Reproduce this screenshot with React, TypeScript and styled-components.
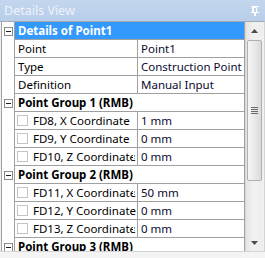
import React from 'react'
import styled, { createGlobalStyle } from 'styled-components'

const GlobalStyle = createGlobalStyle`
  html, body {
    margin: 0;
    padding: 0;
    background: #f2f2f2;
  }
  body {
    width: 265px;
    height: 258px;
    overflow: hidden;
    font-family: "Noto Sans", "DejaVu Sans", sans-serif;
  }
`

const Panel = styled.div`
  width: 265px;
  height: 258px;
  display: flex;
  flex-direction: column;
  background: #f2f2f2;
`
const TitleBar = styled.div`
  height: 21px;
  flex: none;
  display: flex;
  align-items: center;
  justify-content: space-between;
  padding: 0 6px 0 4px;
  background: linear-gradient(#c3d6ee, #b8cee9);
  color: #eef3fa;
  font-size: 12.5px;
`
const Body = styled.div`
  height: 231px;
  flex: none;
  display: flex;
  box-sizing: border-box;
  border-top: 1px solid #a3aab3;
  border-bottom: 1px solid #d4d4d4;
  border-right: 1px solid #d4d4d4;
  padding-left: 1px;
  padding-right: 1px;
`
const Grid = styled.div`
  flex: 1;
  overflow: hidden;
  background: #fff;
  border-left: 1px solid #a0a0a0;
  font-size: 11.5px;
`
const Row = styled.div`
  display: flex;
  height: 18px;
`
const Gutter = styled.div`
  width: 12px;
  flex: none;
  border-right: 1px solid #a0a0a0;
  display: flex;
  justify-content: center;
  padding-top: 5px;
  box-sizing: content-box;
`
const Expander = styled.div`
  width: 7px;
  height: 7px;
  border: 1px solid #8a8a8a;
  background: #fff;
  position: relative;
  margin-left: 1px;
  &::after {
    content: '';
    position: absolute;
    left: 1px;
    top: 3px;
    width: 5px;
    height: 1px;
    background: #202020;
  }
`
const Cell = styled.div<{ $width?: number; $selected?: boolean; $bold?: boolean; $clipped?: boolean }>`
  box-sizing: border-box;
  height: 18px;
  ${({ $width }) => ($width ? `width: ${$width}px; flex: none;` : 'flex: 1;')}
  border-bottom: 1px solid #a0a0a0;
  border-right: 1px solid #a0a0a0;
  display: flex;
  align-items: center;
  padding-left: 3px;
  white-space: nowrap;
  overflow: hidden;
  position: relative;
  background: ${({ $selected }) => ($selected ? '#3399ff' : '#fff')};
  color: ${({ $selected }) => ($selected ? '#fff' : '#000')};
  font-weight: ${({ $bold }) => ($bold ? 700 : 400)};
  ${({ $clipped }) =>
    $clipped &&
    `&::after {
      content: '';
      position: absolute;
      right: 1px;
      top: 7px;
      width: 1px;
      height: 4px;
      border-left: 1px dotted #56a8ee;
      background: #fff;
      box-shadow: -1px 0 0 #fff;
    }`}
`
const Value = styled.span`
  color: #0a0a30;
`
const Check = styled.span`
  width: 9px;
  height: 9px;
  flex: none;
  border: 1px solid #c4c4c4;
  margin: 0 5px 0 -1px;
  background: #fff;
`
const Scrollbar = styled.div`
  width: 17px;
  flex: none;
  display: flex;
  flex-direction: column;
  background: linear-gradient(to right, #e4e4e4, #f1f1f1 40%, #ededed);
  border-left: 1px solid #d8d8d8;
`
const Arrow = styled.div`
  height: 17px;
  flex: none;
  display: flex;
  align-items: center;
  justify-content: center;
`
const Track = styled.div`
  flex: 1;
  padding: 1px 1px 0 1px;
`
const Thumb = styled.div`
  height: 141px;
  box-sizing: border-box;
  border: 1px solid #b0b0b0;
  border-radius: 2px;
  background: linear-gradient(to right, #f6f6f6, #e6e6e6 60%, #dadada);
  display: flex;
  align-items: center;
  justify-content: center;
`
const Footer = styled.div`
  flex: 1;
  background: #f4f4f4;
`

type Item = { name: string; value: string; clipped?: boolean }
type Group = { title: string; selected?: boolean; check?: boolean; items: Item[] }

const groups: Group[] = [
  {
    title: 'Details of Point1',
    selected: true,
    items: [
      { name: 'Point', value: 'Point1' },
      { name: 'Type', value: 'Construction Point' },
      { name: 'Definition', value: 'Manual Input' },
    ],
  },
  {
    title: 'Point Group 1  (RMB)',
    check: true,
    items: [
      { name: 'FD8, X Coordinate', value: '1 mm' },
      { name: 'FD9, Y Coordinate', value: '0 mm' },
      { name: 'FD10, Z Coordinate', value: '0 mm', clipped: true },
    ],
  },
  {
    title: 'Point Group 2  (RMB)',
    check: true,
    items: [
      { name: 'FD11, X Coordinate', value: '50 mm', clipped: true },
      { name: 'FD12, Y Coordinate', value: '0 mm' },
      { name: 'FD13, Z Coordinate', value: '0 mm', clipped: true },
    ],
  },
  { title: 'Point Group 3  (RMB)', check: true, items: [] },
]

const Pin = () => (
  <svg width="8" height="10" viewBox="0 0 8 10">
    <rect x="0" y="0" width="8" height="1" fill="#fff" />
    <rect x="1.5" y="1.5" width="4" height="5" fill="none" stroke="#fff" strokeWidth="1" />
    <rect x="1" y="1" width="2" height="6" fill="#fff" />
    <rect x="0" y="6" width="8" height="1" fill="#fff" />
    <rect x="3" y="7" width="2" height="3" fill="#fff" />
  </svg>
)

const Triangle = ({ down }: { down?: boolean }) => (
  <svg width="7" height="4" viewBox="0 0 7 4">
    <path d={down ? 'M0 0H7L3.5 4Z' : 'M0 4H7L3.5 0Z'} fill="#4a4a4a" />
  </svg>
)

const Grip = () => (
  <svg width="7" height="7" viewBox="0 0 7 7">
    {[0, 2, 4, 6].map((y) => (
      <rect key={y} x="0" y={y} width="7" height="1" fill="#6a6a6a" />
    ))}
  </svg>
)

const App = () => {
  return (
    <Panel>
      <GlobalStyle />
      <TitleBar>
        <span>Details View</span>
        <Pin />
      </TitleBar>
      <Body>
        <Grid>
          {groups.map((g) => (
            <React.Fragment key={g.title}>
              <Row>
                <Gutter>
                  <Expander />
                </Gutter>
                <Cell $selected={g.selected} $bold>
                  {g.title}
                </Cell>
              </Row>
              {g.items.map((it) => (
                <Row key={it.name}>
                  <Gutter />
                  <Cell $width={123} $clipped={it.clipped}>
                    {g.check && <Check />}
                    {it.name}
                  </Cell>
                  <Cell>
                    <Value>{it.value}</Value>
                  </Cell>
                </Row>
              ))}
            </React.Fragment>
          ))}
        </Grid>
        <Scrollbar>
          <Arrow>
            <Triangle />
          </Arrow>
          <Track>
            <Thumb>
              <Grip />
            </Thumb>
          </Track>
          <Arrow>
            <Triangle down />
          </Arrow>
        </Scrollbar>
      </Body>
      <Footer />
    </Panel>
  )
}

export default App
